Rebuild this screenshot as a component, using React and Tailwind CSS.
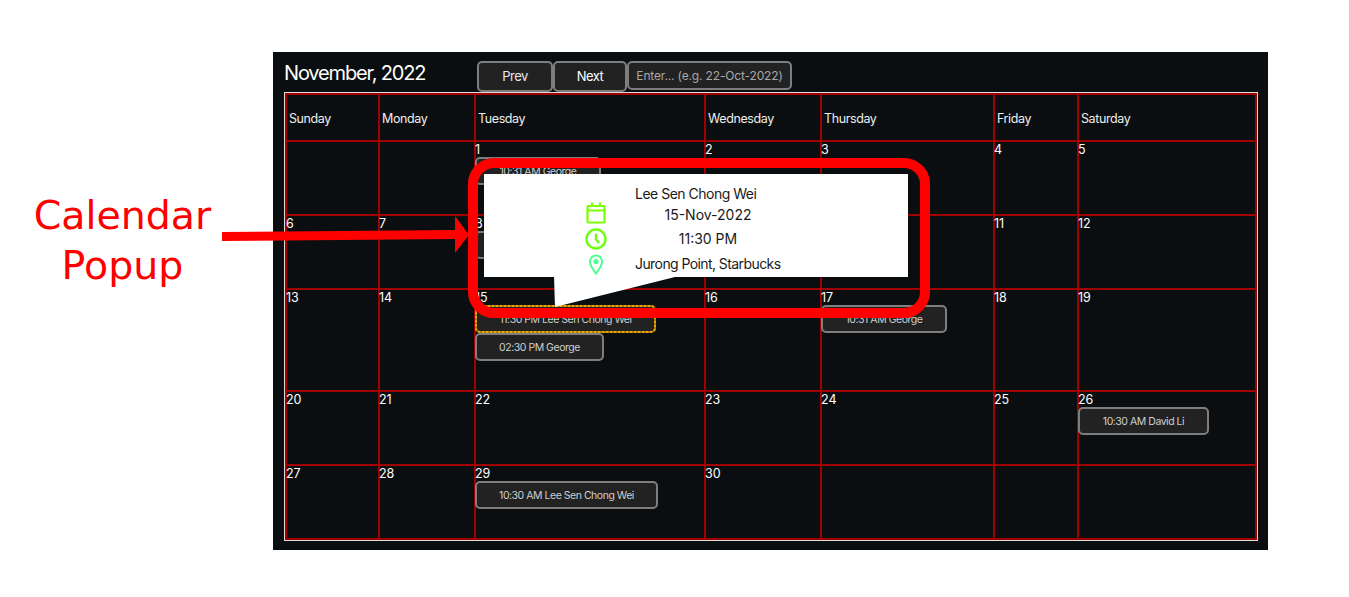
const days = ['Sunday', 'Monday', 'Tuesday', 'Wednesday', 'Thursday', 'Friday', 'Saturday']

// first of the month falls on a Tuesday
const cells = [
  [null, null, 1, 2, 3, 4, 5],
  [6, 7, 8, 9, 10, 11, 12],
  [13, 14, 15, 16, 17, 18, 19],
  [20, 21, 22, 23, 24, 25, 26],
  [27, 28, 29, 30, null, null, null],
]

const events = {
  1: [{ label: '10:31 AM George', w: 'w-[126px]' }],
  8: [{ label: '10:30 AM David Li', w: 'w-[131px]' }],
  15: [
    { label: '11:30 PM Lee Sen Chong Wei', w: 'w-[181px]', active: true },
    { label: '02:30 PM George', w: 'w-[129px]' },
  ],
  17: [{ label: '10:31 AM George', w: 'w-[126px]' }],
  26: [{ label: '10:30 AM David Li', w: 'w-[131px]' }],
  29: [{ label: '10:30 AM Lee Sen Chong Wei', w: 'w-[183px]' }],
}

function EventChip({ label, w, active }) {
  return (
    <div
      className={`${w} h-[28px] flex items-center justify-center rounded-[5px] bg-[#222222] text-[10.5px] tracking-[-0.47px] text-[#cfcfcf] border-2 ${
        active ? 'border-[#a87a00] outline-2 outline-dotted -outline-offset-2 outline-[#f0a800]' : 'border-[#7e7e7e]'
      }`}
    >
      {label}
    </div>
  )
}

function CalendarIcon() {
  return (
    <svg className="w-[24px] h-[24px] mb-[4px] text-[#7cff00]" viewBox="0 0 24 24" fill="none" stroke="currentColor" strokeWidth="2.2">
      <rect x="3.500" y="5" width="17" height="16.500" rx="1" />
      <path d="M3.500 9.500h17M8 1.500V5M16 1.500V5" />
    </svg>
  )
}

function ClockIcon() {
  return (
    <svg className="w-[24px] h-[24px] text-[#6cff10]" viewBox="0 0 24 24" fill="none" stroke="currentColor" strokeWidth="2.400">
      <circle cx="12" cy="12" r="9.500" />
      <path d="M12 6.500v6l3.200 3.500" />
    </svg>
  )
}

function PinIcon() {
  return (
    <svg className="w-[24px] h-[24px] text-[#4dff91]" viewBox="0 0 24 24" fill="none" stroke="currentColor" strokeWidth="2">
      <path d="M12 21.500c-1.200-2-6-7-6-12a6 6 0 0 1 12 0c0 5-4.800 10-6 12z" />
      <circle cx="12" cy="9.500" r="2.600" fill="currentColor" stroke="none" />
    </svg>
  )
}

function Popup() {
  return (
    <>
      <div className="absolute left-[468px] top-[158px] w-[462px] h-[160px] rounded-[26px] border-[10px] border-[#ff0000] z-20" />
      <div className="absolute left-[484px] top-[174px] w-[424px] h-[103px] bg-white shadow-[0_2px_4px_rgba(0,0,0,0.25)] z-10 pl-[100px] pt-[10px] text-[14px] leading-[20px] text-[#1a1a1a]">
        <div className="pl-[51px] tracking-[-0.5px]">Lee Sen Chong Wei</div>
        <div className="flex items-center h-[22px]">
          <CalendarIcon />
          <span className="w-[146px] ml-[27px] text-center">15-Nov-2022</span>
        </div>
        <div className="flex items-center h-[24px] mt-[1px]">
          <ClockIcon />
          <span className="w-[146px] ml-[27px] text-center">11:30 PM</span>
        </div>
        <div className="flex items-center h-[24px] mt-[1px]">
          <PinIcon />
          <span className="ml-[27px] whitespace-nowrap tracking-[-0.58px]">Jurong Point, Starbucks</span>
        </div>
      </div>
      <svg className="absolute left-[554px] top-[276px] z-10" width="126" height="32" viewBox="0 0 126 32">
        <polygon points="0,0 125,0 1,31" fill="#ffffff" />
      </svg>
    </>
  )
}

function Annotation() {
  return (
    <>
      <div className="absolute left-[0px] top-[190px] w-[245px] text-center text-[#ff0000] text-[39.5px] leading-[50px] font-['DejaVu_Sans',sans-serif]">
        Calendar
        <br />
        Popup
      </div>
      <svg className="absolute left-[222px] top-[216px] z-10" width="248" height="38" viewBox="0 0 248 38">
        <polygon points="0,16 233,14 233,0 247,19 233,37 233,23 0,25" fill="#ff0000" />
      </svg>
    </>
  )
}

export default function App() {
  return (
    <div className="relative w-[1349px] h-[597px] bg-white overflow-hidden font-['Inter',sans-serif]">
      <div className="absolute left-[273px] top-[52px] w-[995px] h-[498px] bg-[#0b0e10] px-[11px] pt-[8px] text-white">
        <div className="flex items-start h-[32px]">
          <h1 className="w-[193px] text-[20px] leading-[26px] font-normal tracking-[-1.15px]">November, 2022</h1>
          <button className="w-[76px] h-[31px] mt-[1px] pt-[1px] rounded-[5px] bg-[#222222] border-2 border-[#7e7e7e] text-[13px] tracking-[-0.5px] text-[#e8e8e8]">Prev</button>
          <button className="w-[74px] h-[31px] mt-[1px] pt-[1px] rounded-[5px] bg-[#222222] border-2 border-[#7e7e7e] text-[13px] tracking-[-0.5px]">Next</button>
          <div className="w-[165px] h-[29px] mt-[1px] flex items-center justify-center rounded-[5px] bg-[#222222] border-2 border-[#7e7e7e] text-[12px] tracking-[-0.15px] text-[#a8a8a8] whitespace-nowrap">
            Enter... (e.g. 22-Oct-2022)
          </div>
        </div>

        <div className="border border-[#dcdcdc] w-[974px] h-[449px]">
          <div className="grid grid-cols-[93px_96px_230px_116px_173px_84px_178px] grid-rows-[47px_74px_74px_102px_74px_74px] w-full h-full border-l-2 border-t-2 border-[#a00000]">
            {days.map(d => (
              <div key={d} className="border-r-2 border-b-2 border-[#a00000] pl-[2px] pt-[3px] flex items-center text-[12.5px] tracking-[-0.4px] text-[#eeeeee]">
                {d}
              </div>
            ))}
            {cells.flat().map((n, i) => (
              <div key={i} className="border-r-2 border-b-2 border-[#a00000] text-[12.5px] leading-[15px] text-white">
                <div className="-ml-[1px]">
                  {n}
                  {(events[n] || []).map(e => (
                    <EventChip key={e.label} {...e} />
                  ))}
                </div>
              </div>
            ))}
          </div>
        </div>
      </div>
      <Popup />
      <Annotation />
    </div>
  )
}
